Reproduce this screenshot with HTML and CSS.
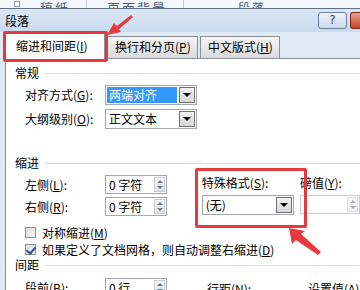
FILE: index.html
```html
<!DOCTYPE html>
<html lang="zh-CN">
<head>
  <meta charset="UTF-8">
  <title>段落</title>
  <link rel="stylesheet" href="styles.css">
</head>
<body>
  <div class="ribbon">
    <span class="launcher"></span>
    <span class="group g1">稿纸</span>
    <span class="sep"></span>
    <span class="group g2">页面背景</span>
    <span class="sep"></span>
    <span class="group g3">段落</span>
  </div>

  <div class="titlebar">
    <div class="title">段落</div>
    <div class="help">?</div>
    <div class="close"></div>
  </div>

  <div class="tabs">
    <div class="tab active">缩进和间距(<u>I</u>)</div>
    <div class="tab">换行和分页(<u>P</u>)</div>
    <div class="tab">中文版式(<u>H</u>)</div>
  </div>

  <div class="panel">
    <div class="heading"><span>常规</span><i></i></div>
    <div class="row">
      <label>对齐方式(<u>G</u>):</label>
      <div class="select"><span class="value selected">两端对齐</span><span class="drop"></span></div>
    </div>
    <div class="row">
      <label>大纲级别(<u>O</u>):</label>
      <div class="select"><span class="value">正文文本</span><span class="drop"></span></div>
    </div>

    <div class="heading gap-big"><span>缩进</span><i></i></div>
    <div class="indent">
      <div class="indent-left">
        <div class="row tight">
          <label>左侧(<u>L</u>):</label>
          <div class="spin"><span class="value">0 字符</span><span class="arrows"></span></div>
        </div>
        <div class="row tight">
          <label>右侧(<u>R</u>):</label>
          <div class="spin"><span class="value">0 字符</span><span class="arrows"></span></div>
        </div>
      </div>
      <div class="indent-special">
        <div class="small-label">特殊格式(<u>S</u>):</div>
        <div class="select wide"><span class="value">(无)</span><span class="drop"></span></div>
      </div>
      <div class="indent-value">
        <div class="small-label">磅值(<u>Y</u>):</div>
        <div class="spin disabled"><span class="value"></span><span class="arrows"></span></div>
      </div>
    </div>

    <div class="check-row first"><span class="box"></span>对称缩进(<u>M</u>)</div>
    <div class="check-row"><span class="box checked"></span>如果定义了文档网格，则自动调整右缩进(<u>D</u>)</div>

    <div class="heading"><span>间距</span><i></i></div>
    <div class="spacing">
      <div class="row tight">
        <label>段前(<u>B</u>):</label>
        <div class="spin"><span class="value">0 行</span><span class="arrows"></span></div>
      </div>
      <div class="small-label col2">行距(<u>N</u>):</div>
      <div class="small-label col3">设置值(<u>A</u>):</div>
    </div>
  </div>

  <div class="mark mark-tab"></div>
  <div class="mark mark-special"></div>

  <svg class="arrows-layer" width="360" height="290" viewBox="0 0 360 290">
    <polygon points="133,17 131,15 117,26 114,23 107,35 121,32 119,29" fill="#e8393f"/>
    <polygon points="318,255 321,252 301,234 305,231 289,228 292,244 296,240" fill="#e8393f"/>
  </svg>
</body>
</html>
```

FILE: styles.css
```css
* {
  margin: 0;
  padding: 0;
  box-sizing: border-box;
}

body {
  width: 360px;
  height: 290px;
  overflow: hidden;
  position: relative;
  background: #dfe9f5;
  font-family: "Noto Sans CJK SC", "Liberation Sans", sans-serif;
  font-size: 12px;
  line-height: 14px;
  color: #000;
}

u {
  text-decoration: underline;
}

/* ribbon strip cut off above the dialog */
.ribbon {
  height: 9px;
  display: flex;
  align-items: flex-end;
  background: #f4f7fb;
  border-bottom: 1px solid #5f6f86;
  overflow: hidden;
  color: #4a5a72;
}

.ribbon .launcher {
  width: 6px;
  height: 6px;
  margin-left: 14px;
  margin-bottom: 1px;
  border: 1px solid #8a9ab0;
}

.ribbon .group {
  margin-bottom: -7px;
  font-size: 13px;
  letter-spacing: 2px;
}

.ribbon .g1 { margin-left: 20px; }
.ribbon .g2 { margin-left: 20px; }
.ribbon .g3 { margin-left: 54px; font-size: 12px; }

.ribbon .sep {
  width: 1px;
  height: 9px;
  margin-left: 16px;
  background: #c3cfdd;
}

.titlebar {
  height: 23px;
  display: flex;
  align-items: center;
  background: linear-gradient(#dce7f5, #c9daef);
  padding-left: 5px;
}

.title {
  flex: 1;
  font-size: 12px;
}

.help {
  width: 29px;
  height: 17px;
  border: 1px solid #6f819a;
  border-radius: 3px;
  background: linear-gradient(#eef3fa, #cbd8e9);
  text-align: center;
  font-family: "DejaVu Sans", sans-serif;
  font-size: 12px;
  line-height: 15px;
  color: #34465e;
}

.close {
  width: 10px;
  height: 17px;
  margin-left: 3px;
  border: 1px solid #7a2a1e;
  border-right: none;
  border-radius: 3px 0 0 3px;
  background: linear-gradient(#e9a08c, #c9442b);
}

.tabs {
  height: 26px;
  display: flex;
  align-items: flex-end;
  padding-left: 5px;
}

.tab {
  height: 22px;
  padding: 0 7px 0 7px;
  margin-left: 2px;
  border: 1px solid #8d9096;
  border-bottom: none;
  background: linear-gradient(#f4f4f4, #dadada);
  line-height: 20px;
  white-space: nowrap;
}

.tab.active {
  height: 26px;
  width: 100px;
  margin-left: 0;
  margin-bottom: -1px;
  padding-left: 10px;
  background: #fff;
  line-height: 24px;
  position: relative;
}

.tab.active + .tab {
  width: 91px;
}

.tab:last-child {
  width: 80px;
}

.panel {
  margin-left: 5px;
  height: 232px;
  overflow: hidden;
  background: #fff;
  border-left: 1px solid #8d9096;
  border-top: 1px solid #8d9096;
  padding: 7px 0 0 9px;
}

.heading {
  display: flex;
  align-items: center;
}

.heading i {
  flex: 1;
  margin-left: 6px;
  border-top: 1px solid #d5dde5;
}

.heading.gap-big {
  margin-top: 27px;
}

.row {
  display: flex;
  align-items: center;
  margin-top: 4px;
  padding-left: 10px;
}

.heading + .row {
  margin-top: 5px;
}

.row label {
  width: 80px;
}

.select {
  width: 92px;
  height: 20px;
  display: flex;
  align-items: center;
  border: 1px solid #a3a6ad;
  padding: 1px;
}

.select .value {
  flex: 1;
  height: 16px;
  padding-left: 2px;
  line-height: 16px;
}

.select .value.selected {
  background: #3399ff;
  color: #fff;
  margin-right: 2px;
}

.drop {
  width: 16px;
  height: 16px;
  border: 1px solid #707070;
  background: linear-gradient(#f2f2f2, #d6d6d6);
  position: relative;
}

.drop::after {
  content: "";
  position: absolute;
  left: 3px;
  top: 5px;
  border-left: 4px solid transparent;
  border-right: 4px solid transparent;
  border-top: 4px solid #000;
}

.indent {
  display: flex;
  margin-top: 5px;
}

.indent-left {
  width: 192px;
}

.row.tight {
  margin-top: 0;
  margin-bottom: 3px;
}

.spin {
  width: 62px;
  height: 19px;
  display: flex;
  align-items: center;
  border: 1px solid #a3a6ad;
  padding: 1px 1px 1px 3px;
}

.spin .value {
  flex: 1;
}

.spin .arrows {
  width: 11px;
  height: 15px;
  border: 1px solid #c8cbd0;
  background: linear-gradient(#f6f6f6, #e2e2e2);
  position: relative;
}

.spin .arrows::before,
.spin .arrows::after {
  content: "";
  position: absolute;
  left: 2px;
  border-left: 3px solid transparent;
  border-right: 3px solid transparent;
}

.spin .arrows::before {
  top: 2px;
  border-bottom: 3px solid #6a7b8f;
}

.spin .arrows::after {
  top: 8px;
  border-top: 3px solid #6a7b8f;
}

.spin.disabled {
  width: 60px;
  background: #fff;
  border-color: #c9cbce;
}

.spin.disabled .arrows {
  opacity: 0.6;
}

.indent-special {
  width: 101px;
  margin-top: 1px;
}

.small-label {
  height: 14px;
  margin-bottom: 5px;
  white-space: nowrap;
}

.indent-value {
  margin-top: 1px;
}

.check-row {
  display: flex;
  align-items: center;
  height: 17px;
  padding-left: 10px;
}

.check-row.first {
  margin-top: 5px;
}

.check-row .box {
  width: 11px;
  height: 11px;
  margin-right: 6px;
  border: 1px solid #8f8f8f;
  background: linear-gradient(135deg, #dcdcdc, #f8f8f8);
  position: relative;
}

.check-row .box.checked::after {
  content: "";
  position: absolute;
  left: 2px;
  top: 0;
  width: 4px;
  height: 7px;
  border-right: 2px solid #2b4f9e;
  border-bottom: 2px solid #2b4f9e;
  transform: rotate(40deg);
}

.check-row + .heading {
  margin-top: 0;
}

.spacing {
  display: flex;
  align-items: center;
  margin-top: 6px;
}

.spacing .row {
  width: 192px;
  flex-shrink: 0;
}

.spacing .small-label {
  margin-bottom: 0;
}

.spacing .col2 {
  width: 101px;
  flex-shrink: 0;
}

/* red annotation boxes over the dialog */
.mark {
  position: absolute;
  border: 3px solid #e53a3d;
  border-radius: 2px;
  pointer-events: none;
}

.mark-tab {
  left: 3px;
  top: 31px;
  width: 105px;
  height: 31px;
}

.mark-special {
  left: 195px;
  top: 168px;
  width: 112px;
  height: 60px;
}

.arrows-layer {
  position: absolute;
  left: 0;
  top: 0;
  pointer-events: none;
}
```
